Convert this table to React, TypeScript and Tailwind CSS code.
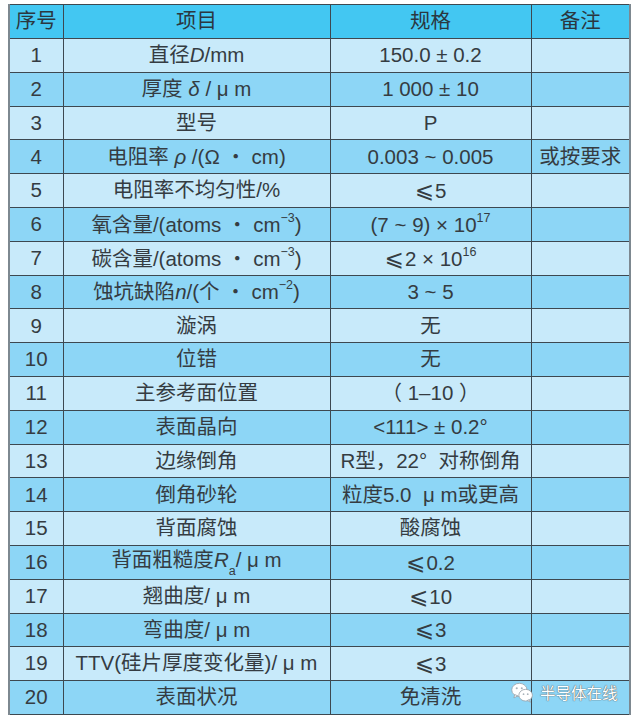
import React from "react";

type Row = [string, React.ReactNode, React.ReactNode, React.ReactNode?];

const Sup = ({ children }: { children: React.ReactNode }) => (
  <sup className="text-[12.5px] relative -top-[2px] align-super leading-none">{children}</sup>
);

const LE = () => (
  <span style={{ fontFamily: '"DejaVu Sans", sans-serif' }} className="text-[23px] leading-none mr-[1px]">
    ⩽
  </span>
);

const rows: Row[] = [
  ["1", <>直径<i>D</i>/mm</>, "150.0 ± 0.2"],
  ["2", <>厚度 <i>δ</i> / μ m</>, "1 000 ± 10"],
  ["3", "型号", "P"],
  ["4", <>电阻率 <i>ρ</i> /(Ω ・ cm)</>, "0.003 ~ 0.005", "或按要求"],
  ["5", "电阻率不均匀性/%", <><LE />5</>],
  ["6", <>氧含量/(atoms ・ cm<Sup>−3</Sup>)</>, <>(7 ~ 9) × 10<Sup>17</Sup></>],
  ["7", <>碳含量/(atoms ・ cm<Sup>−3</Sup>)</>, <><LE />2 × 10<Sup>16</Sup></>],
  ["8", <>蚀坑缺陷<i>n</i>/(个 ・ cm<Sup>−2</Sup>)</>, "3 ~ 5"],
  ["9", "漩涡", "无"],
  ["10", "位错", "无"],
  ["11", "主参考面位置", "（ 1–10 ）"],
  ["12", "表面晶向", "<111> ± 0.2°"],
  ["13", "边缘倒角", "R型，22°  对称倒角"],
  ["14", "倒角砂轮", "粒度5.0  μ m或更高"],
  ["15", "背面腐蚀", "酸腐蚀"],
  ["16", <>背面粗糙度<i>R</i><sub className="text-[12.5px] align-sub leading-none">a</sub>/ μ m</>, <><LE />0.2</>],
  ["17", "翘曲度/ μ m", <><LE />10</>],
  ["18", "弯曲度/ μ m", <><LE />3</>],
  ["19", "TTV(硅片厚度变化量)/ μ m", <><LE />3</>],
  ["20", "表面状况", "免清洗"],
];

function WeChatIcon() {
  return (
    <svg width="23" height="21" viewBox="0 0 22 20">
      <g fill="#ffffff" stroke="#9aa4ab" strokeWidth="0.8">
        <ellipse cx="8" cy="7.5" rx="7.3" ry="6.3" />
        <path d="M3.5 12 L2.8 15.2 L6.5 13.2 Z" />
        <ellipse cx="14" cy="12.6" rx="6.5" ry="5.6" />
        <path d="M17.5 16.8 L18.6 19.3 L15.6 17.6 Z" />
      </g>
      <circle cx="5.5" cy="6" r="1" fill="#a9b3ba" />
      <circle cx="10.3" cy="6" r="1" fill="#a9b3ba" />
      <circle cx="12" cy="11.6" r="0.85" fill="#a9b3ba" />
      <circle cx="16" cy="11.6" r="0.85" fill="#a9b3ba" />
    </svg>
  );
}

export default function App() {
  const font = '"Liberation Sans", "Noto Sans CJK SC", sans-serif';
  return (
    <div className="w-[637px] h-[722px] bg-white relative" style={{ fontFamily: font }}>
      <div className="pt-[4px] pl-[8px]">
        <table className="border-collapse text-[20.5px] text-[#353c42] table-fixed w-[621px] border-l-2 border-r-2 border-l-[#7d8890] border-r-[#7d8890]">
          <colgroup>
            <col className="w-[54px]" />
            <col className="w-[267px]" />
            <col className="w-[201px]" />
            <col className="w-[99px]" />
          </colgroup>
          <thead>
            <tr className="bg-[#43c7f2] h-[34px]">
              {["序号", "项目", "规格", "备注"].map((h) => (
                <th key={h} className="font-normal border border-[#3d4850] p-0 text-center whitespace-nowrap leading-none text-[#2b3740]">
                  {h}
                </th>
              ))}
            </tr>
          </thead>
          <tbody>
            {rows.map((r, i) => (
              <tr key={r[0]} className={(i % 2 === 0 ? "bg-[#c8eafa]" : "bg-[#8dd6f6]") + " h-[33.8px]"}>
                <td className="border border-[#3d4850] p-0 text-center whitespace-nowrap leading-none">{r[0]}</td>
                <td className="border border-[#3d4850] p-0 text-center whitespace-nowrap leading-none">{r[1]}</td>
                <td className="border border-[#3d4850] p-0 text-center whitespace-pre leading-none">{r[2]}</td>
                <td className="border border-[#3d4850] p-0 text-center whitespace-nowrap leading-none">{r[3] ?? ""}</td>
              </tr>
            ))}
          </tbody>
        </table>
      </div>
      <div className="absolute left-[511px] top-[682px] flex items-center gap-[6px]">
        <WeChatIcon />
        <span
          className="text-[15.5px] text-white leading-none"
          style={{ fontFamily: '"Noto Sans CJK SC", sans-serif', textShadow: "0 0 1px #555, 0 0 1px #555" }}
        >
          半导体在线
        </span>
      </div>
    </div>
  );
}
